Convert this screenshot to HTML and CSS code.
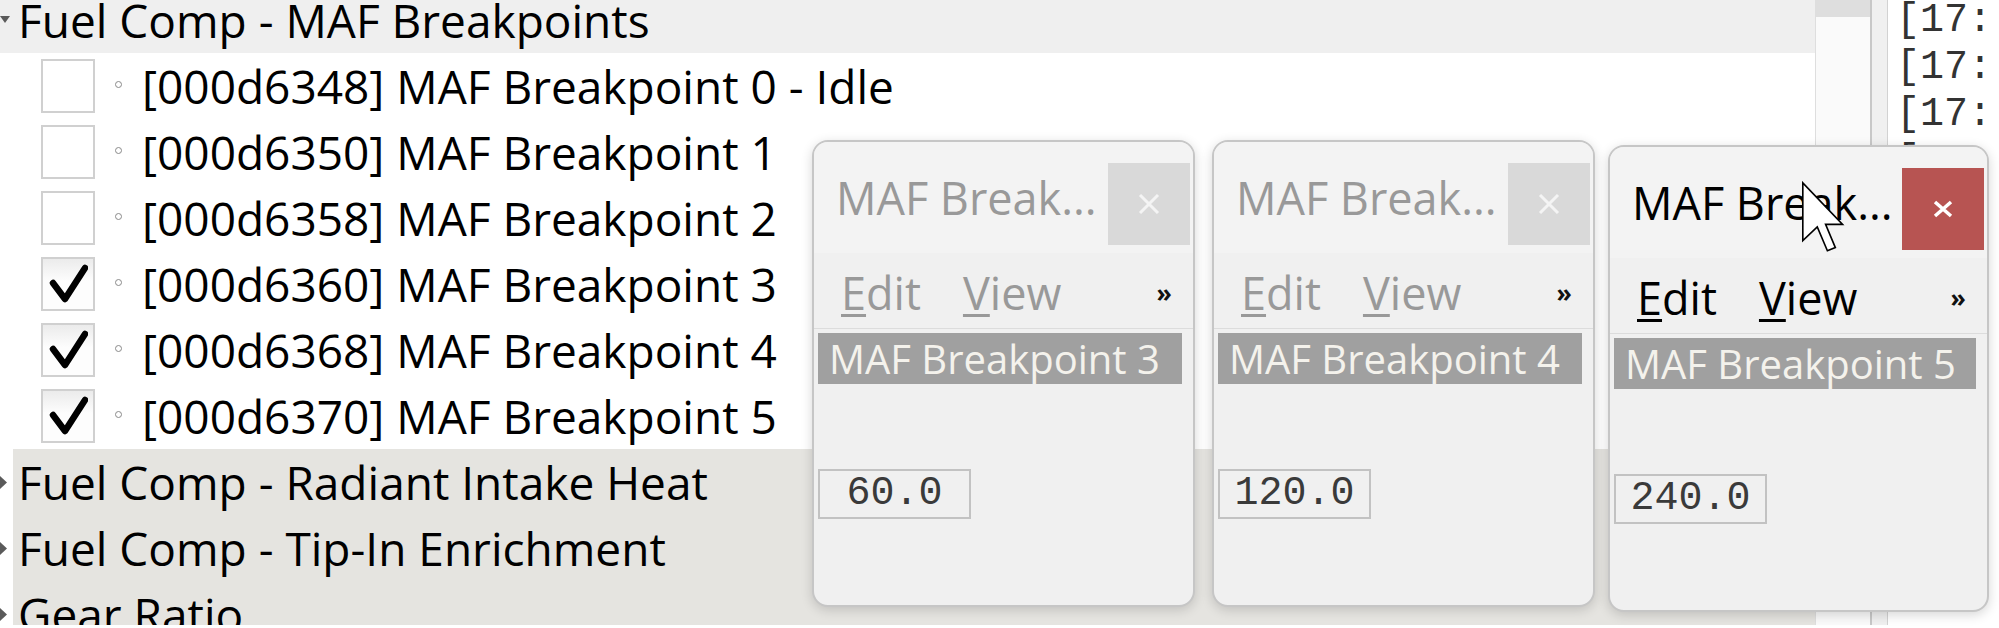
FILE: index.html
```html
<!DOCTYPE html>
<html>
<head>
<meta charset="utf-8">
<title>MAF Breakpoints</title>
<link rel="stylesheet" href="styles.css">
</head>
<body>
<div class="app">
  <div class="tree">
    <div class="tree-inner">
      <div class="row group open">
        <svg class="twisty" width="10" height="8" viewBox="0 0 10 8"><polygon points="0,0 10,0 5,7" fill="#5a5a5a"/></svg>
        <span class="label top-label">Fuel Comp - MAF Breakpoints</span>
      </div>
      <div class="row item">
        <span class="check"></span><span class="dot"></span>
        <span class="label">[000d6348] MAF Breakpoint 0 - Idle</span>
      </div>
      <div class="row item">
        <span class="check"></span><span class="dot"></span>
        <span class="label">[000d6350] MAF Breakpoint 1</span>
      </div>
      <div class="row item">
        <span class="check"></span><span class="dot"></span>
        <span class="label">[000d6358] MAF Breakpoint 2</span>
      </div>
      <div class="row item">
        <span class="check checked"><svg width="40" height="40" viewBox="0 0 40 40"><polyline points="5,19 17,35 37,4" fill="none" stroke="#000" stroke-width="6.5" stroke-linecap="round" stroke-linejoin="round"/></svg></span><span class="dot"></span>
        <span class="label">[000d6360] MAF Breakpoint 3</span>
      </div>
      <div class="row item">
        <span class="check checked"><svg width="40" height="40" viewBox="0 0 40 40"><polyline points="5,19 17,35 37,4" fill="none" stroke="#000" stroke-width="6.5" stroke-linecap="round" stroke-linejoin="round"/></svg></span><span class="dot"></span>
        <span class="label">[000d6368] MAF Breakpoint 4</span>
      </div>
      <div class="row item">
        <span class="check checked"><svg width="40" height="40" viewBox="0 0 40 40"><polyline points="5,19 17,35 37,4" fill="none" stroke="#000" stroke-width="6.5" stroke-linecap="round" stroke-linejoin="round"/></svg></span><span class="dot"></span>
        <span class="label">[000d6370] MAF Breakpoint 5</span>
      </div>
      <div class="collapsed">
        <div class="row group">
          <svg class="twisty" width="10" height="13" viewBox="0 0 10 13"><polygon points="0,0 7,6.5 0,13" fill="#5a5a5a"/></svg>
          <span class="label">Fuel Comp - Radiant Intake Heat</span>
        </div>
        <div class="row group">
          <svg class="twisty" width="10" height="13" viewBox="0 0 10 13"><polygon points="0,0 7,6.5 0,13" fill="#5a5a5a"/></svg>
          <span class="label">Fuel Comp - Tip-In Enrichment</span>
        </div>
        <div class="row group">
          <svg class="twisty" width="10" height="13" viewBox="0 0 10 13"><polygon points="0,0 7,6.5 0,13" fill="#5a5a5a"/></svg>
          <span class="label">Gear Ratio</span>
        </div>
      </div>
    </div>
  </div>
  <div class="vscroll"><div class="thumb"></div></div>
  <div class="splitter"></div>
  <div class="log">
    <div class="log-line">[17:</div>
    <div class="log-line">[17:</div>
    <div class="log-line">[17:</div>
    <div class="log-line">[17:</div>
    <div class="log-line">[17:</div>
  </div>
</div>

<div class="win inactive w1">
  <div class="titlebar">
    <span class="title">MAF Break...</span>
    <span class="close"><svg width="22" height="20" viewBox="0 0 22 20"><path d="M2 1 L20 19 M20 1 L2 19" stroke="currentColor" stroke-width="3" fill="none"/></svg></span>
  </div>
  <div class="menubar">
    <span class="menu"><u>E</u>dit</span>
    <span class="menu"><u>V</u>iew</span>
    <span class="more">»</span>
  </div>
  <div class="namebar">MAF Breakpoint 3</div>
  <div class="valuebox">60.0</div>
</div>

<div class="win inactive w2">
  <div class="titlebar">
    <span class="title">MAF Break...</span>
    <span class="close"><svg width="22" height="20" viewBox="0 0 22 20"><path d="M2 1 L20 19 M20 1 L2 19" stroke="currentColor" stroke-width="3" fill="none"/></svg></span>
  </div>
  <div class="menubar">
    <span class="menu"><u>E</u>dit</span>
    <span class="menu"><u>V</u>iew</span>
    <span class="more">»</span>
  </div>
  <div class="namebar">MAF Breakpoint 4</div>
  <div class="valuebox">120.0</div>
</div>

<div class="win active w3">
  <div class="titlebar">
    <span class="title">MAF Break...</span>
    <span class="close"><svg width="22" height="20" viewBox="0 0 22 20"><path d="M3 3 L19 17 M19 3 L3 17" stroke="currentColor" stroke-width="3.5" fill="none"/></svg></span>
  </div>
  <div class="menubar">
    <span class="menu"><u>E</u>dit</span>
    <span class="menu"><u>V</u>iew</span>
    <span class="more">»</span>
  </div>
  <div class="namebar">MAF Breakpoint 5</div>
  <div class="valuebox">240.0</div>
</div>

<svg class="cursor" width="47" height="76" viewBox="-0.5 -0.5 13 21"><path d="M0 0 L0 16 L4 12.2 L6.8 18.8 L9 17.9 L6.3 11.5 L11 11.5 Z" fill="#fff" stroke="#000" stroke-width="0.45" stroke-linejoin="miter"/></svg>
</body>
</html>
```
FILE: styles.css
```css
html, body {
  margin: 0;
  padding: 0;
  background: #ffffff;
}

body {
  width: 1999px;
  height: 628px;
  overflow: hidden;
  position: relative;
  font-family: "Open Sans", "Noto Sans", sans-serif;
  color: #000;
}

.app {
  display: flex;
  height: 625px;
  overflow: hidden;
}

/* ---------- tree ---------- */
.tree {
  width: 1815px;
  flex: none;
  overflow: hidden;
  background: #fff;
}

.tree-inner {
  margin-top: -13px;
}

.row {
  height: 66px;
  display: flex;
  align-items: center;
  white-space: nowrap;
  font-size: 46px;
  line-height: 66px;
}

.row.open {
  background: #efefef;
}

.top-label {
  line-height: 40px;
}

.twisty {
  flex: none;
  margin-right: 8px;
}

.row.item {
  padding-left: 41px;
}

.check {
  flex: none;
  width: 54px;
  height: 54px;
  box-sizing: border-box;
  border: 2px solid #d0d0d0;
  background: #fff;
  margin-right: 20px;
  display: flex;
  align-items: center;
  justify-content: center;
}

.check.checked {
  background: linear-gradient(#ebebeb, #fdfdfd 45%);
}

.dot {
  flex: none;
  width: 7px;
  height: 7px;
  box-sizing: border-box;
  border: 1.5px solid #8a8a8a;
  border-radius: 50%;
  margin-right: 20px;
  margin-top: -4px;
}

.collapsed {
  background: linear-gradient(to right, #ffffff 13px, #e5e4e0 13px);
}

/* ---------- right side ---------- */
.vscroll {
  width: 55px;
  flex: none;
  box-sizing: border-box;
  border-left: 1px solid #dedede;
  background: #fafafa;
}

.thumb {
  height: 17px;
  background: #dedede;
}

.splitter {
  width: 18px;
  flex: none;
  box-sizing: border-box;
  border-left: 2px solid #c8c8c8;
  border-right: 1px solid #d2d2d2;
  background: #f0f0f0;
}

.log {
  flex: 1;
  background: #fff;
  overflow: hidden;
  padding-left: 8px;
  font-family: "Liberation Mono", "DejaVu Sans Mono", monospace;
  font-size: 40px;
  line-height: 47px;
  color: #333;
  white-space: nowrap;
}

.log-line:first-child {
  margin-top: -3px;
}

/* ---------- floating windows ---------- */
.win {
  position: absolute;
  box-sizing: border-box;
  height: 467px;
  border: 2px solid #c6c6c6;
  border-radius: 16px;
  background: #f0f0f0;
  box-shadow: 0 3px 12px rgba(0, 0, 0, 0.16);
  display: flex;
  flex-direction: column;
  overflow: hidden;
}

.w1 { left: 812px; top: 140px; width: 383px; }
.w2 { left: 1212px; top: 140px; width: 383px; }
.w3 { left: 1608px; top: 145px; width: 381px; }

.titlebar {
  height: 111px;
  flex: none;
  box-sizing: border-box;
  display: flex;
  align-items: flex-start;
  justify-content: space-between;
  padding: 21px 3px 0 22px;
  background: #f3f3f3;
}

.title {
  font-size: 45px;
  line-height: 45px;
  margin-top: 12px;
  white-space: nowrap;
}

.close {
  flex: none;
  width: 82px;
  height: 82px;
  display: flex;
  align-items: center;
  justify-content: center;
}

.menubar {
  height: 76px;
  flex: none;
  box-sizing: border-box;
  display: flex;
  align-items: flex-start;
  padding: 17px 21px 0 27px;
  border-bottom: 1px solid #dcdcdc;
}

.menu {
  font-size: 45px;
  line-height: 45px;
  margin-right: 42px;
}

.menu u {
  text-decoration-thickness: 3px;
  text-underline-offset: 4px;
}

.more {
  margin-left: auto;
  font-size: 25px;
  line-height: 45px;
  font-weight: 700;
  color: #111;
}

.namebar {
  flex: none;
  height: 51px;
  margin: 4px 11px 0 4px;
  padding-left: 11px;
  background: #a0a0a0;
  color: #f4f2ec;
  font-size: 40px;
  line-height: 51px;
  white-space: nowrap;
  overflow: hidden;
}

.valuebox {
  flex: none;
  width: 153px;
  height: 50px;
  box-sizing: border-box;
  margin: 85px 0 0 4px;
  border: 2px solid #c2c2c2;
  font-family: "Liberation Mono", "DejaVu Sans Mono", monospace;
  font-size: 40px;
  line-height: 46px;
  text-align: center;
  color: #3a3a3a;
}

.inactive .title,
.inactive .menu {
  color: #999999;
}

.inactive .close {
  background: #d9d9d9;
  color: #f4f4f4;
}

.active .title,
.active .menu {
  color: #000;
}

.active .close {
  background: #b75452;
  color: #ffffff;
}

.cursor {
  position: absolute;
  left: 1801px;
  top: 181px;
}
```
